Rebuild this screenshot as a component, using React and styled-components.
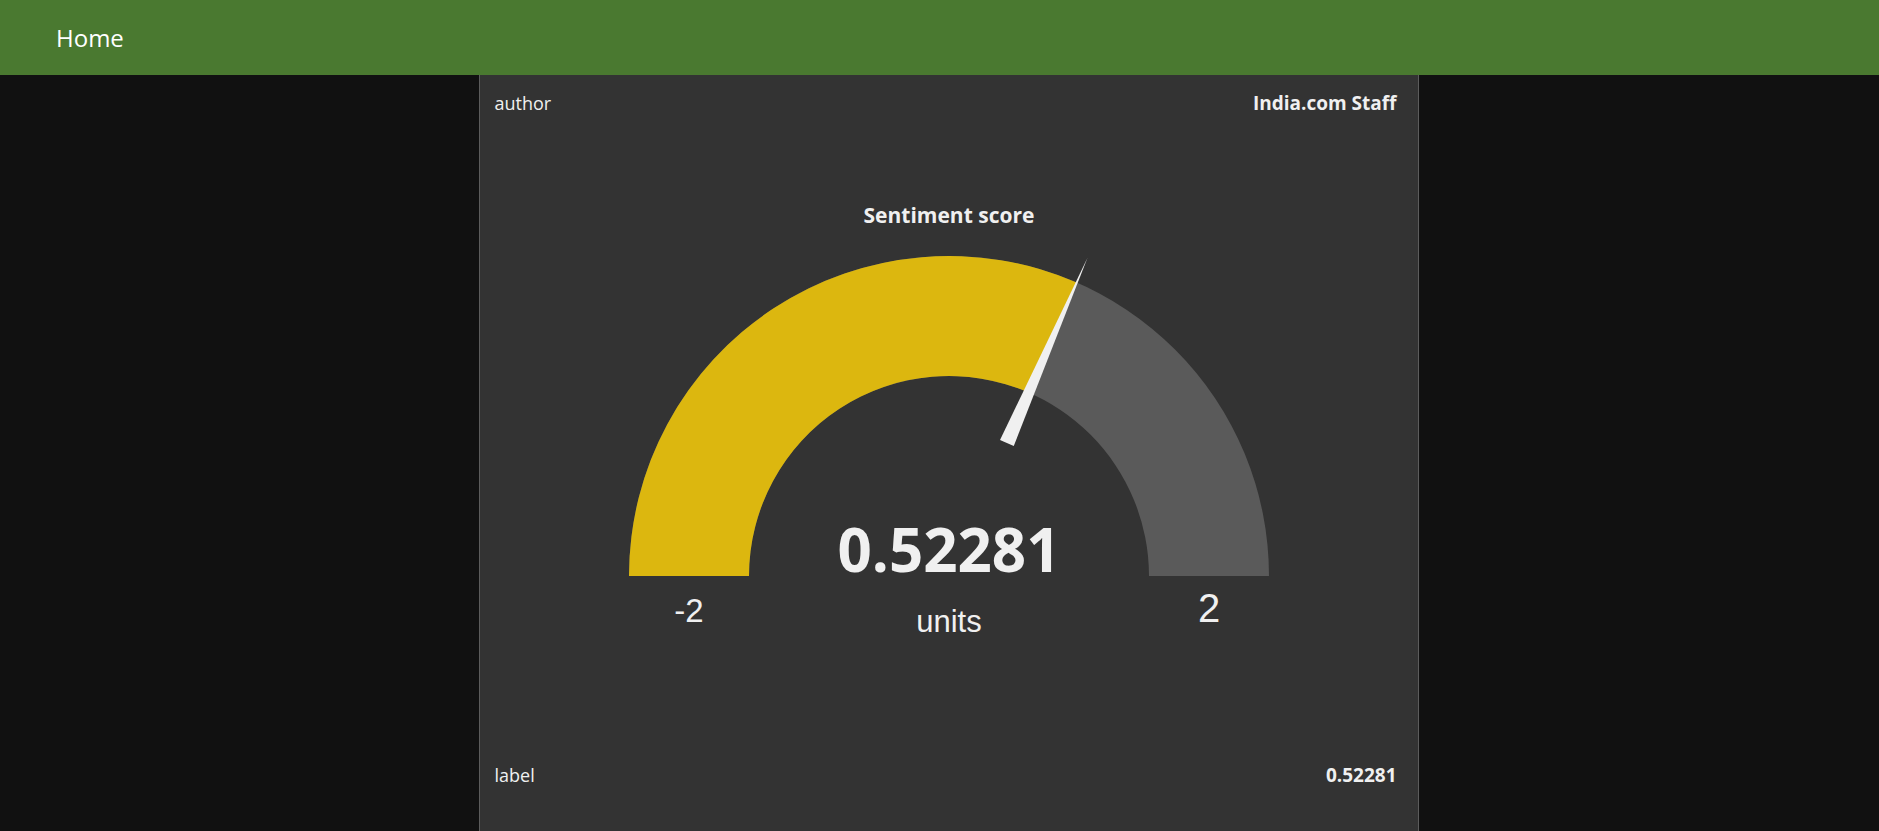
import React from 'react'
import styled, { createGlobalStyle } from 'styled-components'

const GlobalStyle = createGlobalStyle`
  html, body {
    margin: 0;
    padding: 0;
    background: #111111;
    font-family: "Open Sans", "Noto Sans", sans-serif;
    overflow: hidden;
  }
`

const NavBar = styled.header`
  height: 75px;
  background: #4a7930;
  display: flex;
  align-items: center;
  padding-left: 56px;
`

const NavLink = styled.a`
  color: #ffffff;
  font-size: 24px;
  text-decoration: none;
`

const Main = styled.main`
  display: flex;
  justify-content: center;
  padding-left: 18px;
`

const Card = styled.section`
  width: 940px;
  background: #333333;
  border-left: 1px solid #5c5c5c;
  border-right: 1px solid #5c5c5c;
  padding: 16px 21px 60px 15px;
  box-sizing: border-box;
  display: flex;
  flex-direction: column;
  color: #f0f0f0;
`

const Row = styled.div`
  display: flex;
  justify-content: space-between;
  align-items: baseline;
  font-size: 18px;
  line-height: 24px;
  margin-top: ${p => p.offset || 0}px;
`

const Key = styled.span`
  font-weight: 400;
`

const Value = styled.span`
  font-weight: 700;
  font-size: 19px;
`

const GaugeWrap = styled.div`
  display: flex;
  justify-content: center;
  margin-top: 75px;
  padding-left: 6px;
`

const min = -2
const max = 2
const value = 0.52281

const Gauge = () => {
  const cx = 330
  const cy = 386
  const ro = 320
  const ri = 200
  const frac = (value - min) / (max - min)
  const th = Math.PI - frac * Math.PI
  const ux = Math.cos(th)
  const uy = -Math.sin(th)
  const px = -uy
  const py = ux
  const ox = cx + ro * ux
  const oy = cy + ro * uy
  const ix = cx + ri * ux
  const iy = cy + ri * uy
  const bx = cx + 145 * ux
  const by = cy + 145 * uy
  const tx = cx + 347 * ux
  const ty = cy + 347 * uy
  const hw = 7.5
  const needle = `${bx + hw * px},${by + hw * py} ${bx - hw * px},${by - hw * py} ${tx},${ty}`

  return (
    <svg width="660" height="460" viewBox="0 0 660 460">
      <text x={cx} y="33" textAnchor="middle" fill="#f0f0f0"
        fontFamily="'Open Sans', sans-serif" fontWeight="700" fontSize="21">
        Sentiment score
      </text>
      <path
        d={`M ${cx - ro} ${cy} A ${ro} ${ro} 0 0 1 ${cx + ro} ${cy} L ${cx + ri} ${cy} A ${ri} ${ri} 0 0 0 ${cx - ri} ${cy} Z`}
        fill="#5a5a5a"
      />
      <path
        d={`M ${cx - ro} ${cy} A ${ro} ${ro} 0 0 1 ${ox} ${oy} L ${ix} ${iy} A ${ri} ${ri} 0 0 0 ${cx - ri} ${cy} Z`}
        fill="#dcb70f"
      />
      <polygon points={needle} fill="#f0f0f0" />
      <text x={cx} y="382" textAnchor="middle" fill="#f0f0f0"
        fontFamily="'Open Sans', sans-serif" fontWeight="700" fontSize="60">
        0.52281
      </text>
      <text x={cx} y="442" textAnchor="middle" fill="#f0f0f0"
        fontFamily="'Liberation Sans', Arial, sans-serif" fontSize="31">
        units
      </text>
      <text x={cx - (ro + ri) / 2} y="432" textAnchor="middle" fill="#f0f0f0"
        fontFamily="'Liberation Sans', Arial, sans-serif" fontSize="33">
        -2
      </text>
      <text x={cx + (ro + ri) / 2} y="432" textAnchor="middle" fill="#f0f0f0"
        fontFamily="'Liberation Sans', Arial, sans-serif" fontSize="40">
        2
      </text>
    </svg>
  )
}

const App = () => {
  return (
    <div>
      <GlobalStyle />
      <NavBar>
        <NavLink href="#">Home</NavLink>
      </NavBar>
      <Main>
        <Card>
          <Row>
            <Key>author</Key>
            <Value>India.com Staff</Value>
          </Row>
          <GaugeWrap>
            <Gauge />
          </GaugeWrap>
          <Row offset={113}>
            <Key>label</Key>
            <Value>0.52281</Value>
          </Row>
        </Card>
      </Main>
    </div>
  )
}

export default App
